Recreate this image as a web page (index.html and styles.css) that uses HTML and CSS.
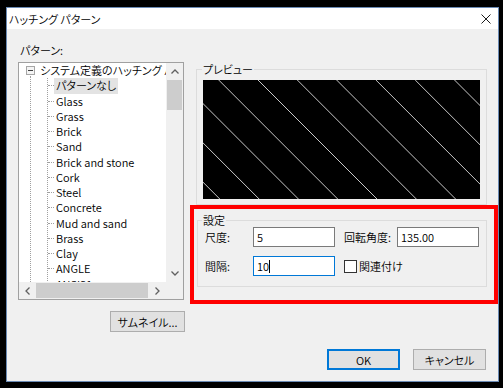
FILE: index.html
```html
<!doctype html>
<html lang="ja">
<head>
<meta charset="utf-8">
<title>ハッチング パターン</title>
<link rel="stylesheet" href="styles.css">
</head>
<body>
<div class="window">
  <div class="titlebar">
    <span class="title">ハッチング パターン</span>
    <svg class="close" width="10" height="10" viewBox="0 0 10 10"><path d="M0.5 0.5L9.5 9.5M9.5 0.5L0.5 9.5" stroke="#1a1a1a" stroke-width="1" fill="none"/></svg>
  </div>
  <div class="client">
    <div class="main">
      <div class="left">
        <div class="caption">パターン:</div>
        <div class="tree">
          <div class="tree-view">
            <div class="row root"><span class="toggle"></span><span>システム定義のハッチング パターン</span></div>
            <div class="children">
              <div class="row item"><span class="name selected">パターンなし</span></div>
              <div class="row item"><span class="name">Glass</span></div>
              <div class="row item"><span class="name">Grass</span></div>
              <div class="row item"><span class="name">Brick</span></div>
              <div class="row item"><span class="name">Sand</span></div>
              <div class="row item"><span class="name">Brick and stone</span></div>
              <div class="row item"><span class="name">Cork</span></div>
              <div class="row item"><span class="name">Steel</span></div>
              <div class="row item"><span class="name">Concrete</span></div>
              <div class="row item"><span class="name">Mud and sand</span></div>
              <div class="row item"><span class="name">Brass</span></div>
              <div class="row item"><span class="name">Clay</span></div>
              <div class="row item"><span class="name">ANGLE</span></div>
              <div class="row item"><span class="name">ANSI31</span></div>
              <div class="row item"><span class="name">ANSI32</span></div>
            </div>
          </div>
          <div class="vscroll">
            <div class="arrow"><svg width="8" height="5" viewBox="0 0 8 5"><path d="M0.5 4.5L4 1L7.5 4.5" stroke="#606060" stroke-width="1.3" fill="none"/></svg></div>
            <div class="vthumb"></div>
            <div class="spacer"></div>
            <div class="arrow"><svg width="8" height="5" viewBox="0 0 8 5"><path d="M0.5 0.5L4 4L7.5 0.5" stroke="#606060" stroke-width="1.3" fill="none"/></svg></div>
          </div>
          <div class="hscroll">
            <div class="arrow"><svg width="5" height="8" viewBox="0 0 5 8"><path d="M4.5 0.5L1 4L4.5 7.5" stroke="#606060" stroke-width="1.3" fill="none"/></svg></div>
            <div class="hthumb"></div>
            <div class="spacer"></div>
            <div class="arrow"><svg width="5" height="8" viewBox="0 0 5 8"><path d="M0.5 0.5L4 4L0.5 7.5" stroke="#606060" stroke-width="1.3" fill="none"/></svg></div>
          </div>
          <div class="corner"></div>
        </div>
        <button class="btn thumbs">サムネイル...</button>
      </div>

      <div class="right">
        <fieldset class="group preview">
          <legend>プレビュー</legend>
          <svg class="hatch" width="277" height="119" viewBox="0 0 277 119">
            <rect width="277" height="119" fill="#000"/>
            <g stroke="#c8c8c8" stroke-width="1">
              <line x1="-102.2" y1="0" x2="16.8" y2="119"/>
              <line x1="-62.9" y1="0" x2="56.1" y2="119"/>
              <line x1="-23.6" y1="0" x2="95.4" y2="119"/>
              <line x1="15.7" y1="0" x2="134.7" y2="119"/>
              <line x1="55" y1="0" x2="174" y2="119"/>
              <line x1="94.3" y1="0" x2="213.3" y2="119"/>
              <line x1="133.6" y1="0" x2="252.6" y2="119"/>
              <line x1="172.9" y1="0" x2="291.9" y2="119"/>
              <line x1="212.2" y1="0" x2="331.2" y2="119"/>
              <line x1="251.5" y1="0" x2="370.5" y2="119"/>
            </g>
          </svg>
        </fieldset>
        <div class="highlight">
          <fieldset class="group settings">
            <legend>設定</legend>
            <div class="form">
              <span class="lbl">尺度:</span>
              <div class="field">5</div>
              <span class="lbl second">回転角度:</span>
              <div class="field">135.00</div>
              <span class="lbl">間隔:</span>
              <div class="field focused">10<span class="caret"></span></div>
              <label class="check"><span class="box"></span>関連付け</label>
            </div>
          </fieldset>
        </div>
      </div>
    </div>

    <div class="actions">
      <button class="btn default">OK</button>
      <button class="btn">キャンセル</button>
    </div>
  </div>
</div>
</body>
</html>
```

FILE: styles.css
```css
* { box-sizing: border-box; }

html, body
{
	margin: 0;
	padding: 0;
}

body
{
	background: #000;
	width: 503px;
	height: 388px;
	overflow: hidden;
	font-family: "Noto Sans CJK JP", "Noto Sans", sans-serif;
	font-size: 11px;
	font-weight: 350;
	font-feature-settings: "palt";
	color: #000;
}

.window
{
	margin: 7px 0 0 6px;
	width: 493px;
	height: 375px;
	border: 1px solid #6a8ab4;
	background: #f0f0f0;
	display: flex;
	flex-direction: column;
}

.titlebar
{
	height: 21px;
	background: #fff;
	display: flex;
	align-items: center;
	justify-content: space-between;
	padding: 0 7px 0 2px;
	flex: none;
}

.title { line-height: 14px; }

.close { display: block; }

.client
{
	flex: 1;
	padding: 14px 0 0 11px;
}

.main
{
	display: flex;
	align-items: flex-start;
	gap: 6px;
}

.left { width: 166px; flex: none; }

.caption
{
	height: 14px;
	line-height: 14px;
	margin: 0 0 5px 2px;
}

/* tree view */
.tree
{
	height: 238px;
	border: 1px solid #a0a0a0;
	background: #fff;
	display: grid;
	grid-template-columns: 147px 17px;
	grid-template-rows: 219px 17px;
}

.tree-view
{
	position: relative;
	overflow: hidden;
}

.tree-view::before
{
	content: "";
	position: absolute;
	left: 11px;
	top: 13px;
	bottom: 0;
	border-left: 1px dotted #a0a0a0;
}

.row
{
	height: 15.25px;
	line-height: 15.25px;
	display: flex;
	align-items: center;
	white-space: nowrap;
}

.root { padding-left: 7px; }

.toggle
{
	position: relative;
	flex: none;
	width: 9px;
	height: 9px;
	border: 1px solid #a6a6a6;
	background: #f4f4f4;
	margin-right: 5px;
}

.toggle::after
{
	content: "";
	position: absolute;
	left: 1px;
	top: 3px;
	width: 5px;
	height: 1px;
	background: #404040;
}

.children
{
	margin-left: 28px;
	border-left: 1px dotted #a0a0a0;
}

.item::before
{
	content: "";
	flex: none;
	width: 6px;
	border-top: 1px dotted #a0a0a0;
}

.name { padding: 0 2px; }

.name.selected { background: #e3e3e3; }

/* scrollbars */
.vscroll, .hscroll, .corner { background: #f0f0f0; }

.vscroll
{
	display: flex;
	flex-direction: column;
}

.hscroll { display: flex; }

.arrow
{
	flex: none;
	width: 17px;
	height: 17px;
	display: flex;
	align-items: center;
	justify-content: center;
}

.arrow svg { display: block; }

.spacer { flex: 1; }

.vthumb
{
	height: 30px;
	margin: 0 1px;
	background: #cdcdcd;
}

.hthumb
{
	width: 112px;
	margin: 1px 0;
	background: #cdcdcd;
}

/* buttons */
.btn
{
	height: 21px;
	padding: 0;
	border: 1px solid #adadad;
	background: #e1e1e1;
	font: inherit;
	color: #000;
}

.thumbs
{
	display: block;
	width: 75px;
	margin: 11px 0 0 92px;
}

.actions
{
	display: flex;
	justify-content: flex-end;
	gap: 13px;
	margin-top: 17px;
	padding-right: 12px;
}

.actions .btn { width: 73px; }

.btn.default
{
	border-color: #0078d7;
	box-shadow: inset 0 0 0 1px #0078d7;
}

/* right side */
.right
{
	width: 308px;
	flex: none;
	margin-top: 19px;
}

.group
{
	margin: 0;
	min-width: 0;
	border: 1px solid #dcdcdc;
}

.group legend
{
	padding: 0 1px;
	line-height: 14px;
}

.preview
{
	width: 291px;
	margin-left: 6px;
	padding: 4px 6px 5px 6px;
}

.preview legend { margin-left: -1px; }

.hatch { display: block; }

.highlight
{
	height: 99px;
	border: 4px solid #ff0000;
	padding: 4px 0 0 3px;
}

.settings
{
	width: 290px;
	padding: 0 7px 10px 7px;
}

.settings legend { margin-left: -3px; }

.form
{
	display: grid;
	grid-template-columns: 48px 82px 62px 82px;
	grid-auto-rows: 20px;
	row-gap: 9px;
	align-items: center;
}

.lbl { line-height: 14px; }

.lbl.second { padding-left: 9px; }

.field
{
	height: 20px;
	border: 1px solid #7a7a7a;
	background: #fff;
	padding-left: 3px;
	line-height: 18px;
	display: flex;
	align-items: center;
}

.field.focused { border-color: #0078d7; }

.caret
{
	width: 1px;
	height: 13px;
	background: #000;
}

.check
{
	grid-column: 3 / 5;
	padding-left: 9px;
	display: flex;
	align-items: center;
	line-height: 14px;
}

.check .box
{
	width: 13px;
	height: 13px;
	border: 1px solid #333;
	background: #fff;
	margin-right: 2px;
}
```
